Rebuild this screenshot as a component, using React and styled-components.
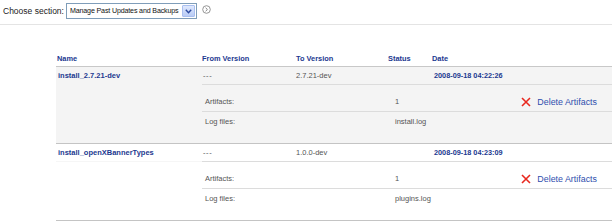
import React from "react";
import styled, { createGlobalStyle } from "styled-components";

const Global = createGlobalStyle`
  html, body { margin: 0; padding: 0; background: #fff; }
  body { font-family: "Liberation Sans", Arial, sans-serif; color: #444; }
`;

const Page = styled.div`
  width: 612px;
  height: 222px;
  overflow: hidden;
`;

const TopBar = styled.div`
  display: flex;
  align-items: center;
  height: 16px;
  padding: 3px 0 0 3px;
`;

const Label = styled.span`
  font-size: 8.5px;
  color: #222;
  margin-right: 2px;
  white-space: nowrap;
`;

const Select = styled.div`
  box-sizing: border-box;
  width: 131px;
  height: 16px;
  border: 1px solid #7f9db9;
  display: flex;
  align-items: center;
  padding: 0 1px 0 3px;
  color: #111;
`;

const SelectText = styled.span`
  flex: 1;
  min-width: 0;
  font-size: 7.1px;
  letter-spacing: -0.15px;
  white-space: nowrap;
  overflow: hidden;
`;

const DropBtn = styled.div`
  box-sizing: border-box;
  flex: none;
  width: 13px;
  height: 12px;
  border: 1px solid #a9bff0;
  border-radius: 1px;
  background: linear-gradient(#dfe8fd, #b8cbf5);
  display: flex;
  align-items: center;
  justify-content: center;
`;

const GoIcon = styled.svg`
  margin-left: 5px;
  margin-top: -4px;
`;

const Rule = styled.div`
  height: 1px;
  background: #e4e4e4;
  margin-top: 5px;
`;

const Table = styled.div`
  margin: 25px 0 0 56px;
`;

const HeadRow = styled.div`
  display: grid;
  grid-template-columns: 146px 94px 92px 44px 1fr;
  height: 16px;
  align-items: center;
  border-bottom: 1px solid #c8c8c8;
`;

const HeadCell = styled.div`
  font-size: 7.4px;
  font-weight: bold;
  color: #1c3990;
  padding-left: ${(p) => p.$pad || 0}px;
`;

const Group = styled.div`
  display: grid;
  grid-template-columns: 146px 1fr;
  background: ${(p) => (p.$shade ? "#f4f4f4" : "#fff")};
  border-bottom: 1px solid #c4c4c4;
`;

const NameCell = styled.div`
  height: 17px;
  display: flex;
  align-items: center;
  padding-left: 2px;
  font-size: 7.5px;
  font-weight: bold;
  color: #1c3990;
  border-bottom: 1px solid ${(p) => (p.$shade ? "transparent" : "#f6f6f6")};
  align-self: start;
`;

const RightPart = styled.div`
  display: flex;
  flex-direction: column;
`;

const MainValues = styled.div`
  display: grid;
  grid-template-columns: 94px 92px 44px 1fr;
  height: 17px;
  align-items: center;
  border-bottom: 1px solid #dcdcdc;
`;

const Val = styled.div`
  font-size: 7.5px;
  color: #555;
  padding-left: ${(p) => p.$pad || 0}px;
  letter-spacing: ${(p) => (p.$dash ? "0.6px" : "normal")};
`;

const DateVal = styled.div`
  font-size: 7.3px;
  font-weight: bold;
  color: #1c3990;
  padding-left: 2px;
`;

const Details = styled.div`
  padding: 7px 0 11px;
`;

const DetailRow = styled.div`
  display: grid;
  grid-template-columns: 193px 1fr auto;
  height: 20px;
  box-sizing: border-box;
  align-items: center;
  border-bottom: 1px solid ${(p) => (p.$line ? "#dcdcdc" : "transparent")};
`;

const Action = styled.a`
  display: flex;
  align-items: center;
  gap: 6px;
  padding-right: 15px;
  font-size: 8.9px;
  color: #2f4fae;
  text-decoration: none;
`;

const XIcon = () => (
  <svg width="10" height="10" viewBox="0 0 10 10">
    <path d="M1 1 L9 9 M9 1 L1 9" stroke="#e8281e" strokeWidth="1.6" />
  </svg>
);

const rows = [
  { name: "install_2.7.21-dev", from: "---", to: "2.7.21-dev", date: "2008-09-18 04:22:26", log: "install.log", shade: true },
  { name: "install_openXBannerTypes", from: "---", to: "1.0.0-dev", date: "2008-09-18 04:23:09", log: "plugins.log", shade: false },
];

export default function App() {
  return (
    <Page>
      <Global />
      <TopBar>
        <Label>Choose section:</Label>
        <Select>
          <SelectText>Manage Past Updates and Backups</SelectText>
          <DropBtn>
            <svg width="7" height="5" viewBox="0 0 7 5">
              <path d="M0.8 0.8 L3.5 3.8 L6.2 0.8" stroke="#2b4aa0" strokeWidth="1.4" fill="none" />
            </svg>
          </DropBtn>
        </Select>
        <GoIcon width="9" height="9" viewBox="0 0 9 9">
          <circle cx="4.5" cy="4.5" r="3.8" fill="#fff" stroke="#8a8a8a" strokeWidth="0.9" />
          <path d="M3.6 2.8 L5.4 4.5 L3.6 6.2" stroke="#777" strokeWidth="0.9" fill="none" />
        </GoIcon>
      </TopBar>
      <Rule />
      <Table>
        <HeadRow>
          <HeadCell $pad={1}>Name</HeadCell>
          <HeadCell>From Version</HeadCell>
          <HeadCell>To Version</HeadCell>
          <HeadCell>Status</HeadCell>
          <HeadCell>Date</HeadCell>
        </HeadRow>
        {rows.map((r) => (
          <Group key={r.name} $shade={r.shade}>
            <NameCell $shade={r.shade}>{r.name}</NameCell>
            <RightPart>
              <MainValues>
                <Val $pad={1} $dash>{r.from}</Val>
                <Val>{r.to}</Val>
                <Val />
                <DateVal>{r.date}</DateVal>
              </MainValues>
              <Details>
                <DetailRow $line>
                  <Val $pad={3}>Artifacts:</Val>
                  <Val>1</Val>
                  <Action href="#">
                    <XIcon />
                    Delete Artifacts
                  </Action>
                </DetailRow>
                <DetailRow>
                  <Val $pad={3}>Log files:</Val>
                  <Val>{r.log}</Val>
                  <span />
                </DetailRow>
              </Details>
            </RightPart>
          </Group>
        ))}
      </Table>
    </Page>
  );
}
